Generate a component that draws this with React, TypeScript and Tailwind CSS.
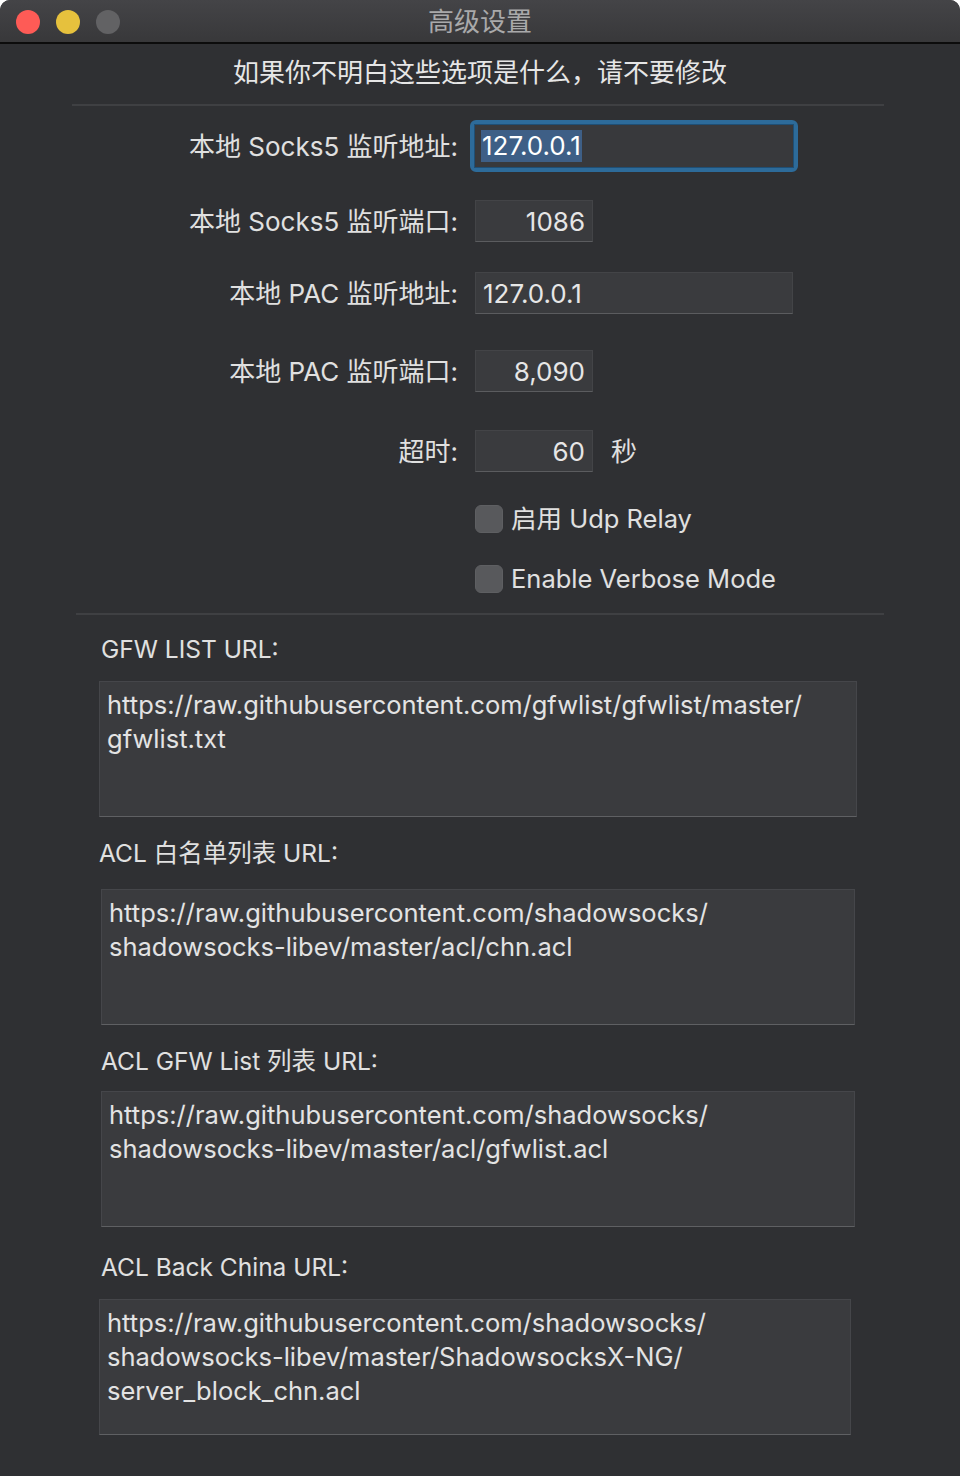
const font = "font-['Inter','Noto_Sans_CJK_SC',sans-serif]";

function Field({ value, w, right }: { value: string; w: string; right?: boolean }) {
  return (
    <div
      className={`flex h-[42px] items-center border border-[#434447] border-b-[#5b5c5f] bg-[#3a3b3e] px-[7px] text-[26px] text-[#e6e6e6] ${w} ${
        right ? "justify-end" : "justify-start"
      }`}
    >
      {value}
    </div>
  );
}

function Row({ label, children, className }: { label: string; children: React.ReactNode; className?: string }) {
  return (
    <div className={`flex items-center ${className ?? ""}`}>
      <div className="w-[458px] text-right text-[26px] text-[#e0e0e0]">{label}</div>
      <div className="ml-[17px] flex items-center">{children}</div>
    </div>
  );
}

function Check({ label, className }: { label: string; className?: string }) {
  return (
    <div className={`flex h-[32px] items-center pl-[475px] ${className ?? ""}`}>
      <div className="h-[28px] w-[28px] rounded-[6px] border border-[#5e5f62] bg-[#58595c]" />
      <span className="ml-[8px] text-[25.5px] leading-[32px] text-[#e0e0e0]">{label}</span>
    </div>
  );
}

function UrlBox({ label, lines, x, w, labelX, labelGap, className }: {
  label: string;
  lines: string[];
  x: string;
  w: string;
  labelX: string;
  labelGap: string;
  className?: string;
}) {
  return (
    <div className={className}>
      <div className={`${labelX} text-[24.5px] leading-[32px] text-[#e0e0e0]`}>{label}</div>
      <div
        className={`${x} ${w} ${labelGap} h-[136px] border border-[#45464a] border-b-[#5f6063] bg-[#3a3b3e] px-[7px] pt-[6px] text-[25.5px] leading-[34px] text-[#e3e3e3]`}
      >
        {lines.map((l) => (
          <div key={l}>{l}</div>
        ))}
      </div>
    </div>
  );
}

export default function App() {
  return (
    <div className={`h-[1476px] w-[960px] overflow-hidden rounded-t-[10px] bg-[#2f3033] ${font}`}>
      {/* title bar */}
      <div className="relative flex h-[44px] items-center justify-center border-b-[2px] border-[#0c0c0c] bg-gradient-to-b from-[#444447] to-[#38383a]">
        <div className="absolute left-[16px] top-[10px] flex gap-[16px]">
          <div className="h-[24px] w-[24px] rounded-full bg-[#fe5b56]" />
          <div className="h-[24px] w-[24px] rounded-full bg-[#e6c13d]" />
          <div className="h-[24px] w-[24px] rounded-full bg-[#626264]" />
        </div>
        <span className="text-[26px] text-[#a9a9aa]">高级设置</span>
      </div>

      <div className="mt-[12px] text-center text-[26px] leading-[34px] text-[#e6e6e6]">
        如果你不明白这些选项是什么，请不要修改
      </div>
      <div className="ml-[72px] mr-[76px] mt-[14px] h-[2px] bg-[#3f4043]" />

      <Row label="本地 Socks5 监听地址:" className="mt-[14px]">
        <div className="-ml-[5px] rounded-[6px] border-[4px] border-[#2d6b9a]">
          <div className="flex h-[44px] w-[320px] items-center border border-[#1f4f75] bg-[#38393c] pl-[6px] text-[26px] text-white">
            <span className="bg-[#3e5f86] px-[1px] leading-[32px]">127.0.0.1</span>
          </div>
        </div>
      </Row>

      <Row label="本地 Socks5 监听端口:" className="mt-[28px]">
        <Field value="1086" w="w-[118px]" right />
      </Row>

      <Row label="本地 PAC 监听地址:" className="mt-[30px]">
        <Field value="127.0.0.1" w="w-[318px]" />
      </Row>

      <Row label="本地 PAC 监听端口:" className="mt-[36px]">
        <Field value="8,090" w="w-[118px]" right />
      </Row>

      <Row label="超时:" className="mt-[38px]">
        <Field value="60" w="w-[118px]" right />
        <span className="ml-[18px] text-[26px] text-[#e0e0e0]">秒</span>
      </Row>

      <Check label="启用 Udp Relay" className="mt-[31px]" />
      <Check label="Enable Verbose Mode" className="mt-[28px]" />

      <div className="mx-[76px] mt-[18px] h-[2px] bg-[#3f4043]" />

      <UrlBox
        className="mt-[18px]"
        label="GFW LIST URL:"
        labelX="ml-[101px]"
        labelGap="mt-[16px]"
        x="ml-[99px]"
        w="w-[758px]"
        lines={["https://raw.githubusercontent.com/gfwlist/gfwlist/master/", "gfwlist.txt"]}
      />
      <UrlBox
        className="mt-[20px]"
        label="ACL 白名单列表 URL:"
        labelX="ml-[99px]"
        labelGap="mt-[20px]"
        x="ml-[101px]"
        w="w-[754px]"
        lines={["https://raw.githubusercontent.com/shadowsocks/", "shadowsocks-libev/master/acl/chn.acl"]}
      />
      <UrlBox
        className="mt-[20px]"
        label="ACL GFW List 列表 URL:"
        labelX="ml-[101px]"
        labelGap="mt-[14px]"
        x="ml-[101px]"
        w="w-[754px]"
        lines={["https://raw.githubusercontent.com/shadowsocks/", "shadowsocks-libev/master/acl/gfwlist.acl"]}
      />
      <UrlBox
        className="mt-[24px]"
        label="ACL Back China URL:"
        labelX="ml-[101px]"
        labelGap="mt-[16px]"
        x="ml-[99px]"
        w="w-[752px]"
        lines={[
          "https://raw.githubusercontent.com/shadowsocks/",
          "shadowsocks-libev/master/ShadowsocksX-NG/",
          "server_block_chn.acl",
        ]}
      />
    </div>
  );
}
